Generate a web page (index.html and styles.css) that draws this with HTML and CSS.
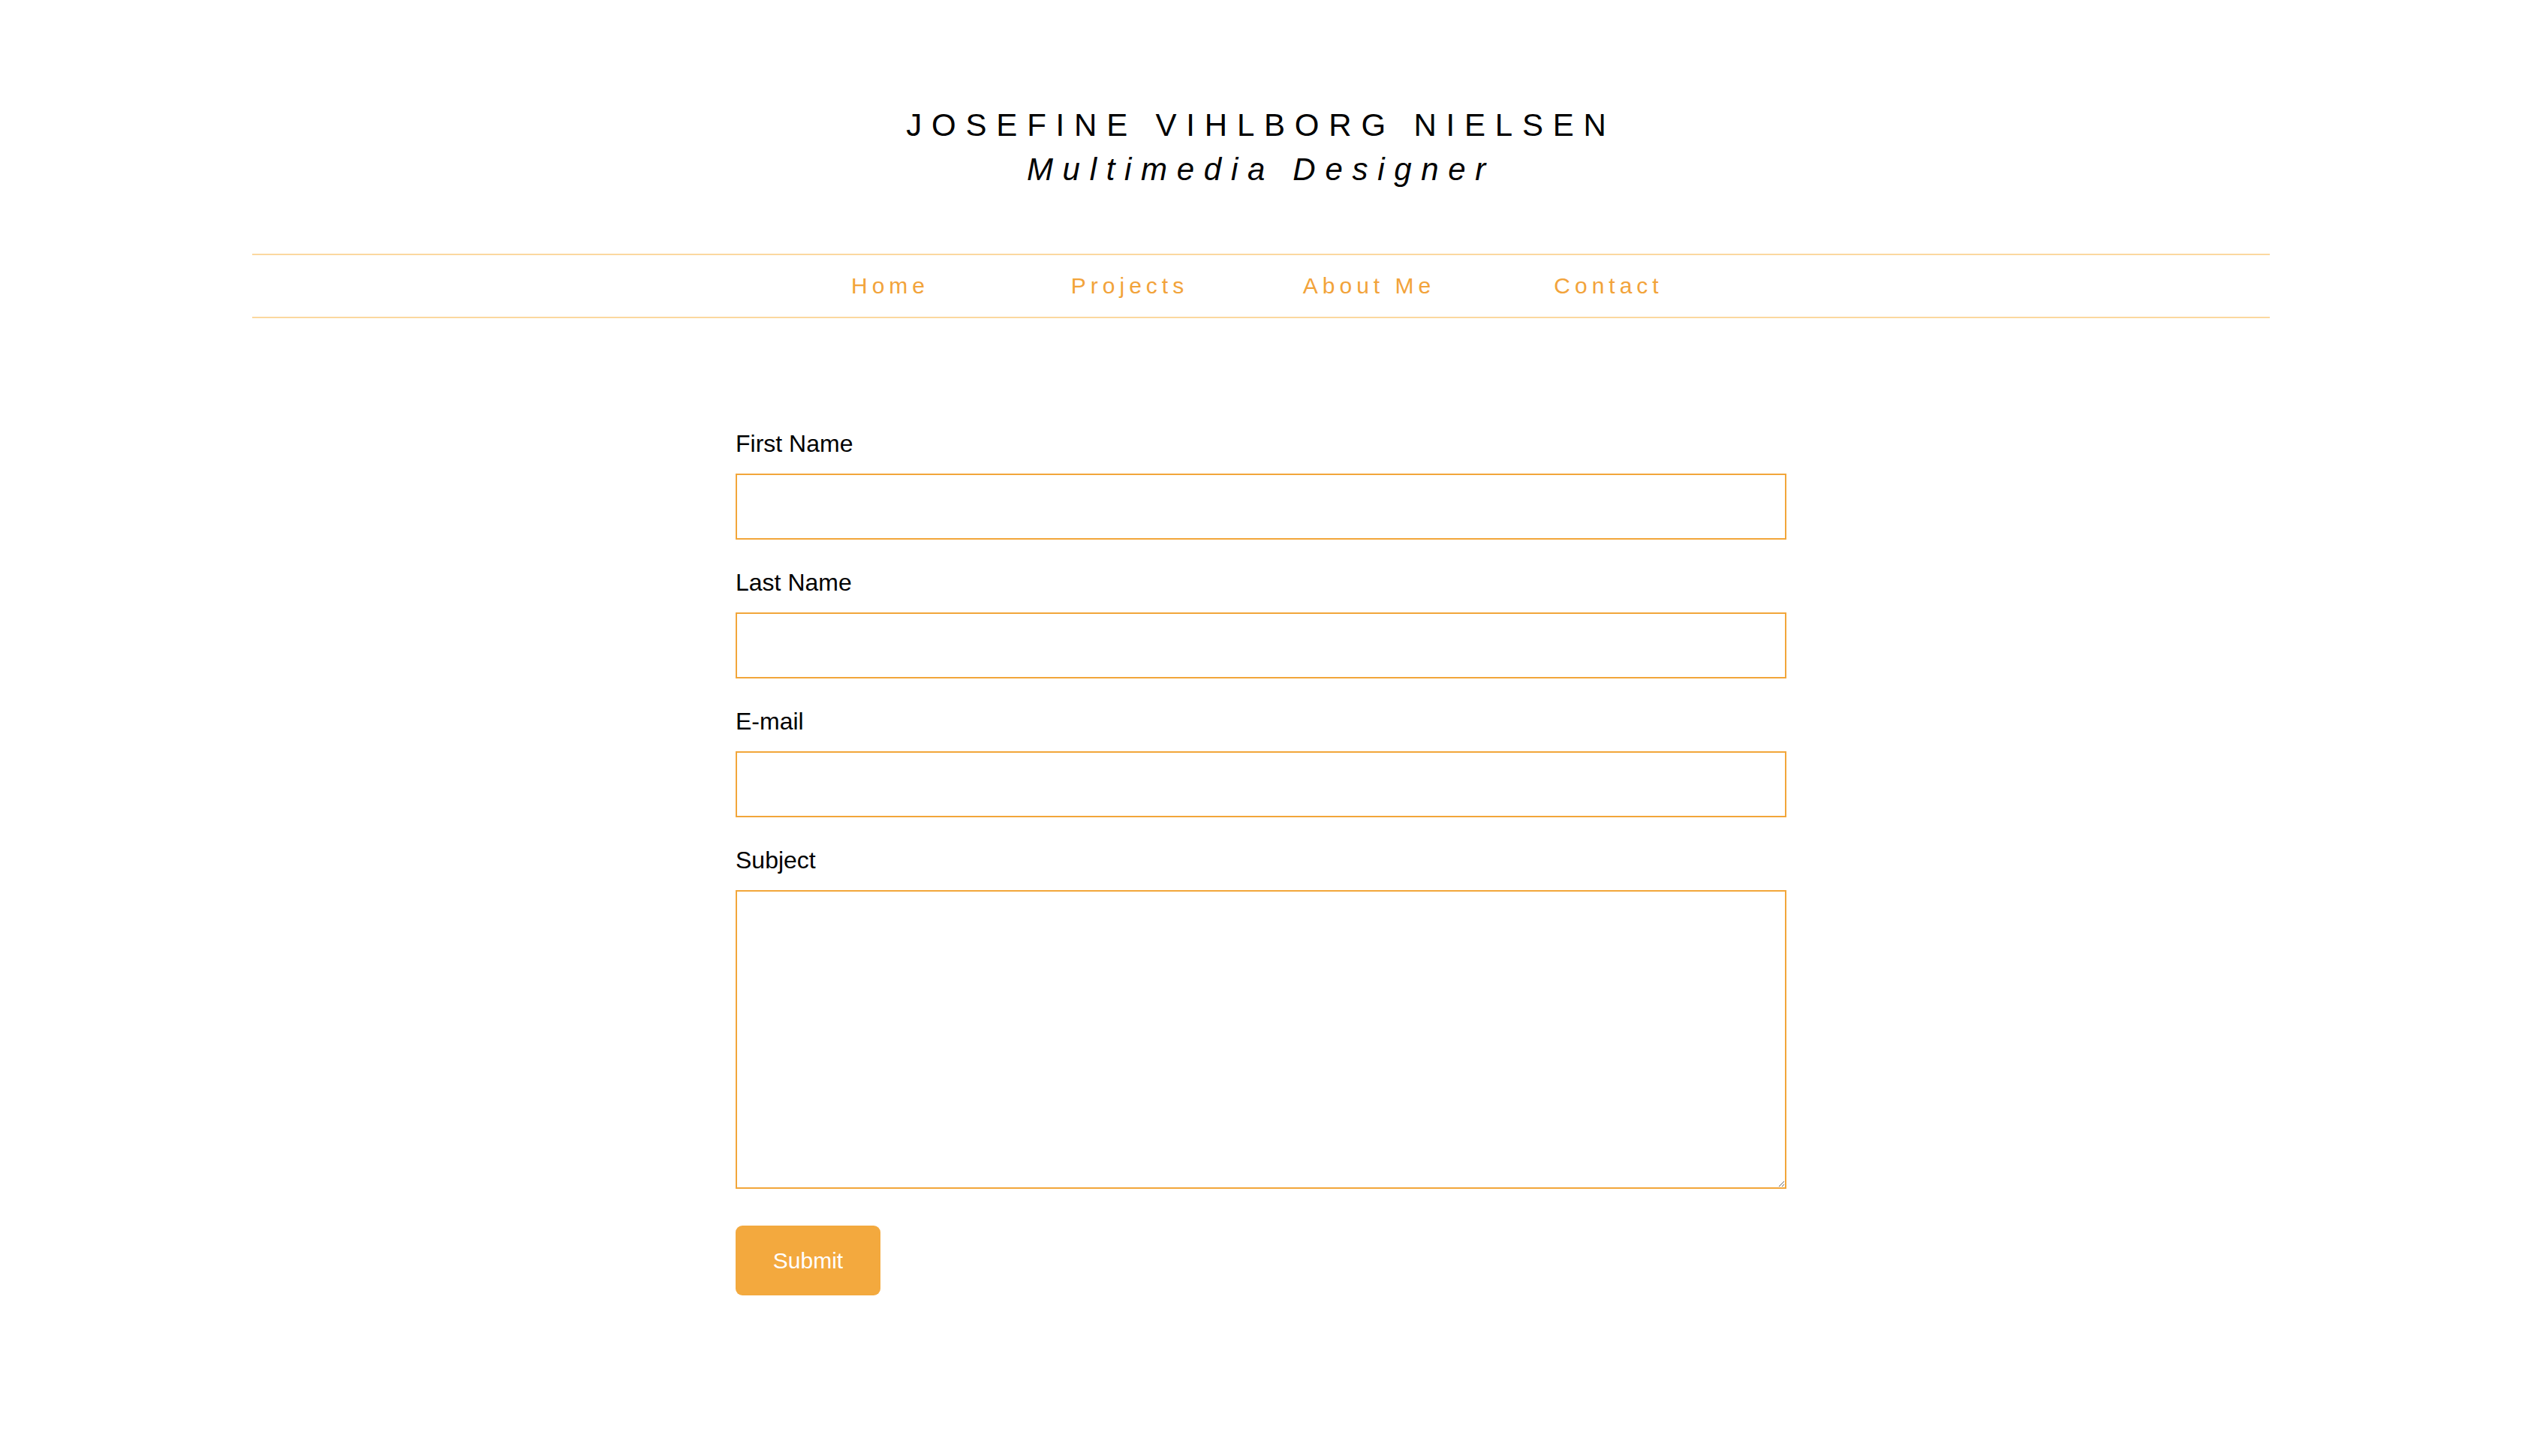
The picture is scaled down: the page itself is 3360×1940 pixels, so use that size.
FILE: index.html
```html
<!DOCTYPE html>
<html lang="en">
<head>
<meta charset="utf-8">
<title>Contact - Josefine Vihlborg Nielsen</title>
<link rel="stylesheet" href="styles.css">
</head>
<body>
<header class="site-header">
  <div class="site-title">JOSEFINE VIHLBORG NIELSEN</div>
  <div class="site-subtitle">Multimedia Designer</div>
</header>
<nav class="main-nav">
  <ul class="nav-list">
    <li class="nav-item"><a class="nav-link" href="#">Home</a></li>
    <li class="nav-item"><a class="nav-link" href="#">Projects</a></li>
    <li class="nav-item"><a class="nav-link" href="#">About Me</a></li>
    <li class="nav-item"><a class="nav-link" href="#">Contact</a></li>
  </ul>
</nav>
<main class="content">
  <form class="contact-form">
    <label class="field-label" for="fname">First Name</label>
    <input class="field-input" type="text" id="fname">
    <label class="field-label" for="lname">Last Name</label>
    <input class="field-input" type="text" id="lname">
    <label class="field-label" for="email">E-mail</label>
    <input class="field-input" type="text" id="email">
    <label class="field-label" for="subject">Subject</label>
    <textarea class="field-textarea" id="subject"></textarea>
    <button class="submit-btn" type="button">Submit</button>
  </form>
</main>
</body>
</html>
```
FILE: styles.css
```css
html, body {
  margin: 0;
  padding: 0;
  background: #ffffff;
}
body {
  font-family: "Liberation Sans", Arial, Helvetica, sans-serif;
  color: #000;
}
.site-header {
  padding-top: 143px;
  text-align: center;
}
.site-title {
  font-size: 42px;
  line-height: 48px;
  letter-spacing: 12.8px;
  color: #000;
}
.site-subtitle {
  margin-top: 11px;
  font-size: 42px;
  line-height: 48px;
  font-style: italic;
  letter-spacing: 12.7px;
  color: #000;
}
.main-nav {
  width: 80%;
  margin: 88px auto 0;
  border-top: 2px solid #fbd89f;
  border-bottom: 2px solid #fbd89f;
}
.nav-list {
  list-style: none;
  margin: 0;
  padding: 0 31px 0 0;
  display: flex;
  justify-content: center;
}
.nav-item {
  width: 319px;
  text-align: center;
  font-size: 30px;
  line-height: 82px;
  height: 82px;
}
.nav-link {
  font-size: 30px;
  letter-spacing: 6px;
  color: #f2a33a;
  text-decoration: none;
}
.content {
  padding-top: 149px;
  padding-bottom: 100px;
}
.contact-form {
  width: 1400px;
  margin: 0 auto;
  display: flex;
  flex-direction: column;
  align-items: flex-start;
}
.field-label {
  display: block;
  font-size: 32px;
  line-height: 36px;
  margin-bottom: 22px;
  color: #000;
}
.field-input,
.field-textarea {
  display: block;
  box-sizing: border-box;
  width: 1400px;
  margin: 0 0 39px 0;
  border: 2px solid #f2a63a;
  border-radius: 0;
  background: #fff;
  font-family: "Liberation Sans", Arial, sans-serif;
  font-size: 30px;
  padding: 0 10px;
  outline: none;
}
.field-input {
  height: 88px;
}
.field-textarea {
  height: 398px;
  margin-bottom: 49px;
  resize: both;
}
.submit-btn {
  box-sizing: border-box;
  width: 193px;
  height: 93px;
  border: none;
  border-radius: 9px;
  background: #f3a93e;
  color: #fff;
  font-family: "Liberation Sans", Arial, sans-serif;
  font-size: 30px;
  padding: 0;
  cursor: pointer;
}
```
